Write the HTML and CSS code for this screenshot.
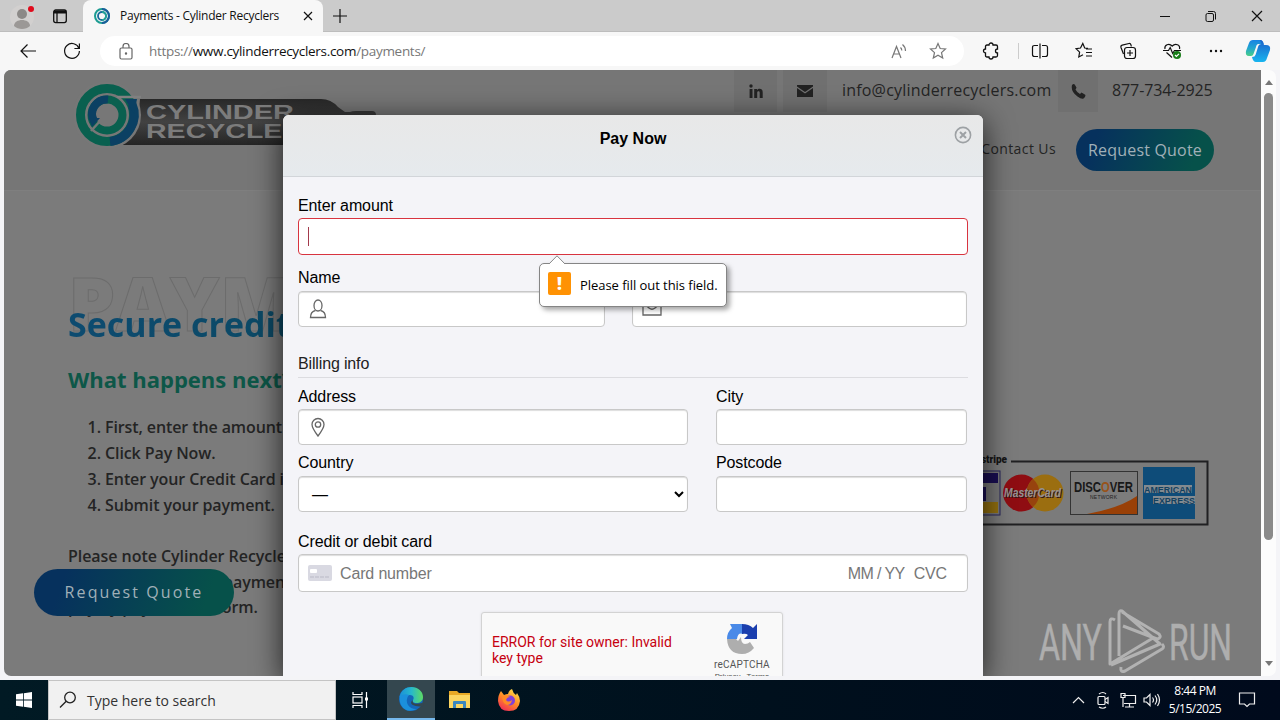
FILE: index.html
```html
<!DOCTYPE html>
<html lang="en">
<head>
<meta charset="utf-8">
<title>Payments - Cylinder Recyclers</title>
<link rel="stylesheet" href="styles.css">
</head>
<body>
<div class="tabstrip">
  <svg class="profile" width="28" height="28" viewBox="0 0 28 28"><circle cx="14" cy="14" r="12" fill="#d2d0cf"/><circle cx="14" cy="11" r="5" fill="#8c8987"/><path d="M6 23c0-8 16-8 16 0-4 4-12 4-16 0z" fill="#9b9896"/><circle cx="23" cy="6" r="3" fill="#e00b1c"/></svg>
  <svg class="tabmenu" width="16" height="16" viewBox="0 0 16 16" fill="none" stroke="#111" stroke-width="1.3"><rect x="1.7" y="2" width="12.6" height="12.6" rx="2"/><path d="M2 4h12" stroke-width="3"/><path d="M5 5v9"/></svg>
  <div class="tab">
    <svg class="fav" width="18" height="18" viewBox="0 0 18 18" fill="none"><circle cx="9" cy="9" r="7" stroke="#1c9c92" stroke-width="2"/><path d="M9 2a7 7 0 0 1 0 14" stroke="#1a5d9b" stroke-width="2"/><circle cx="9" cy="9" r="4" stroke="#1a6b9b" stroke-width="1.8"/><path d="M9 5a4 4 0 0 1 0 8" stroke="#22a394" stroke-width="1.8"/></svg>
    <span class="tab-title">Payments - Cylinder Recyclers</span>
    <svg class="tab-x" width="10" height="10" viewBox="0 0 10 10" stroke="#111" stroke-width="1.2"><path d="M1 1l8 8M9 1l-8 8"/></svg>
  </div>
  <svg class="newtab" width="14" height="14" viewBox="0 0 14 14" stroke="#111" stroke-width="1.2"><path d="M7 0v14M0 7h14"/></svg>
  <svg class="winbtns" width="112" height="14" viewBox="0 0 112 14" fill="none" stroke="#111"><path d="M1 7.500h10"/><rect x="47" y="4.500" width="7.500" height="8" rx="1.500"/><path d="M49 2.500h5.500q2 0 2 2v6"/><path d="M93 2l10 10M103 2L93 12" stroke-width="1.200"/></svg>
</div>
<div class="toolbar">
  <svg class="back" width="18" height="18" viewBox="0 0 18 18" fill="none" stroke="#111" stroke-width="1.2"><path d="M17 9H2M8.500 2.500L2 9l6.500 6.500"/></svg>
  <svg class="reload" width="18" height="18" viewBox="0 0 18 18" fill="none" stroke="#111" stroke-width="1.2"><path d="M16 6.500A7.400 7.400 0 1 0 16.400 9M16.400 1.500v5h-5"/></svg>
  <div class="address">
    <svg width="14" height="17" viewBox="0 0 14 17" fill="none" stroke="#666" stroke-width="1.2"><rect x="1" y="5" width="12" height="11" rx="1.500"/><path d="M4 5V3.500a3 3 0 0 1 6 0V5"/><circle cx="7" cy="10.500" r=".6" fill="#666"/></svg>
    <span class="url">https://<b>www.cylinderrecyclers.com</b>/payments/</span>
    <svg class="read" width="18" height="16" viewBox="0 0 18 16" fill="none" stroke="#777" stroke-width="1.2"><path d="M2 15L6.500 3.500 11 15M3.700 11h5.600M10.500 4.500q1.300 1.200 1.300 3M12.500 1.500q3 2.500 3 6.500"/></svg>
    <svg class="star" width="18" height="18" viewBox="0 0 18 18" fill="none" stroke="#777" stroke-width="1.2"><path d="M9 1.500l2.200 5 5.300.5-4 3.600 1.200 5.400L9 13.200 4.300 16l1.200-5.400-4-3.600 5.300-.5z"/></svg>
  </div>
  <div class="tools">
    <svg width="18" height="18" viewBox="0 0 18 18" fill="none" stroke="#111" stroke-width="1.3"><path d="M5 3h2a2 2 0 0 1 4 0h3q1.500 0 1.500 1.500V7a2 2 0 1 0 0 4v2.500q0 1.500-1.500 1.500h-3a2 2 0 0 1-4 0H5q-1.500 0-1.500-1.500V11a2 2 0 0 1 0-4V4.500Q3.500 3 5 3z"/></svg>
    <i class="sep"></i>
    <svg class="t2" width="18" height="18" viewBox="0 0 18 18" fill="none" stroke="#111" stroke-width="1.2"><path d="M7 3.500H3.500q-2 0-2 2v7q0 2 2 2H7M11 3.500h3.500q2 0 2 2v7q0 2-2 2H11M9 1.500v15"/></svg>
    <svg class="t3" width="18" height="18" viewBox="0 0 18 18" fill="none" stroke="#111" stroke-width="1.2"><path d="M13 6.300l-3.300-.3L7.800 1.500 5.500 6 1 6.700l3.600 3.400L3.800 15 8 12.700M11 7h6M11 10.500h6M11 14h6"/></svg>
    <svg class="t4" width="18" height="18" viewBox="0 0 18 18" fill="none" stroke="#111" stroke-width="1.2"><path d="M4.500 12L2 5.500q-.5-1.800 1.200-2.300L10 1.500q1.500-.3 2 1.500l.3 1.500"/><rect x="5.500" y="5.500" width="11" height="11" rx="2.500"/><path d="M11 8v6M8 11h6"/></svg>
    <svg class="t5" width="19" height="18" viewBox="0 0 19 18" fill="none" stroke="#111" stroke-width="1.2"><path d="M9 15.500L3.500 10.500M2 7C1 3 6 .5 9.200 4 12.500.5 17.500 3 16.500 7M0 8.500h5.500l1.700-3 2.500 6L11.500 8.500H18"/><circle cx="14" cy="13" r="4" fill="#187d19" stroke="none"/><path d="M12 13l1.400 1.400L16 11.800" stroke="#fff"/></svg>
    <svg class="t6" width="16" height="4" viewBox="0 0 16 4" fill="#111"><circle cx="3" cy="2" r="1.200"/><circle cx="8" cy="2" r="1.200"/><circle cx="13" cy="2" r="1.200"/></svg>
    <svg class="copilot" width="26" height="24" viewBox="0 0 26 24"><defs><linearGradient id="ca" x1="0" y1="0" x2="0" y2="1"><stop offset="0" stop-color="#1782e4"/><stop offset=".5" stop-color="#21a5d0"/><stop offset="1" stop-color="#49ce87"/></linearGradient><linearGradient id="cb" x1="0" y1="0" x2="0" y2="1"><stop offset="0" stop-color="#1d60c9"/><stop offset="1" stop-color="#18b5ef"/></linearGradient></defs><path d="M8 1h7q3 0 3.500 4l-5 0q-2 0-2.500 3L8.500 15q-.6 2-2.500 2H4q-4 0-3-5l3-8q1-3 4-3z" fill="url(#ca)"/><path d="M15 1q3 0 4 5h2q5 0 4 5l-3 8q-1 4-4 4h-7q-3 0-4-5 3 0 3.700-2.500L13 8q.7-3 3.500-3z" fill="url(#cb)"/></svg>
  </div>
</div>

<div class="window">
  <main class="page">
    <header class="site-header">
      <svg class="logo" width="310" height="66" viewBox="0 0 310 66">
        <defs><linearGradient id="plate" x1="0" y1="0" x2="0" y2="1"><stop offset="0" stop-color="#282828"/><stop offset=".5" stop-color="#424242"/><stop offset="1" stop-color="#252525"/></linearGradient></defs>
        <path d="M66 17H247q10 0 17 8l7 5h5q2-1 6-1h16q4 0 4 4v30H48Q65 50 65 28z" fill="url(#plate)"/>
        <circle cx="33" cy="33" r="34" fill="#777"/>
        <circle cx="33" cy="33" r="26.500" fill="none" stroke="#09604f" stroke-width="9"/>
        <path d="M58 22A27 27 0 0 1 36 59.500" fill="none" stroke="#0b4063" stroke-width="9"/>
        <path d="M51 17h12l-3 15z" fill="#0b4063"/>
        <path d="M43 15h24" stroke="#808080" stroke-width="2.500"/>
        <circle cx="33" cy="33" r="15.500" fill="none" stroke="#09604f" stroke-width="8"/>
        <path d="M20 39A14.500 14.500 0 0 1 34 17.500" fill="none" stroke="#0b4063" stroke-width="8"/>
        <path d="M15 36h11l-8 9z" fill="#0b4063"/><path d="M27 38L17 49" stroke="#777" stroke-width="2.500"/>
        <g fill="#7c7c7c" font-family="Liberation Sans, sans-serif" font-weight="700" font-size="19.500"><text x="72" y="37" textLength="148" lengthAdjust="spacingAndGlyphs">CYLINDER</text><text x="72" y="56" textLength="176" lengthAdjust="spacingAndGlyphs">RECYCLERS</text></g>
      </svg>
      <div class="header-right">
        <div class="contact">
          <span class="ico in"><svg width="14" height="14" viewBox="0 0 14 14" fill="#222"><circle cx="2" cy="2" r="1.700"/><path d="M.6 5h2.900v9H.6zM5.200 5H8v1.200C9.500 4 13.700 4.300 13.700 8.200V14h-3V8.700c0-2-2.500-1.800-2.500 0V14h-3z"/></svg></span>
          <span class="ico mail"><svg width="16" height="12" viewBox="0 0 16 12" fill="#222"><path d="M0 0h16v1.500L8 7 0 1.500zM0 3l8 5.500L16 3v9H0z"/></svg></span>
          <span class="email">info@cylinderrecyclers.com</span>
          <span class="ico tel"><svg width="15" height="15" viewBox="0 0 15 15" fill="#222"><path d="M1 1q2-2 3 0l1.500 2.500Q5 5 4.500 5.500q1.500 3 4.500 4.500l1.500-1.500q3 1.500 4 2.500 0 2-2 3.500-2 .8-6-2Q-.5 7.500 1 1z"/></svg></span>
          <span class="phone">877-734-2925</span>
        </div>
        <div class="nav"><span class="contact-us">Contact Us</span><span class="quote">Request Quote</span></div>
      </div>
    </header>
    <div class="content">
      <section class="intro">
        <div class="ghost">PAYMENTS</div>
        <h1>Secure credit card</h1>
        <h2>What happens next?</h2>
        <ol><li>First, enter the amount</li><li>Click Pay Now.</li><li>Enter your Credit Card info.</li><li>Submit your payment.</li></ol>
        <p>Please note Cylinder Recyclers<br><span class="lead">accepts card </span>payments<br><span class="lead2">pay by payment</span>form.</p>
      </section>
      <svg class="cards" width="250" height="76" viewBox="0 0 250 76" font-family="Liberation Sans, sans-serif">
        <path d="M51 11.500H247.500V74.500H0" fill="none" stroke="#202022" stroke-width="2"/>
        <text x="21" y="13" font-family="Roboto, sans-serif" font-weight="900" font-size="10" textLength="26" fill="#151515">stripe</text>
        <rect x="-20" y="21" width="60" height="44" fill="#777" stroke="#27255b"/><path d="M-20 23h58v10h-58zM-20 37h46v14h-46z" fill="#190e52"/><path d="M-20 52h58v11h-58z" fill="#93700f"/>
        <circle cx="61.500" cy="43" r="18.500" fill="#8f0d12"/><circle cx="85" cy="43" r="18.500" fill="#9b6e10"/><path d="M73 29a18.500 18.500 0 0 1 0 28 18.500 18.500 0 0 1 0-28z" fill="#97430e"/>
        <text x="45" y="48" font-size="12" font-weight="700" font-style="italic" fill="#331818" textLength="57" lengthAdjust="spacingAndGlyphs">MasterCard</text>
        <text x="44" y="47" font-size="12" font-weight="700" font-style="italic" fill="#969292" textLength="57" lengthAdjust="spacingAndGlyphs">MasterCard</text>
        <rect x="110.500" y="21.500" width="67" height="43" fill="#7c7c7c" stroke="#333"/><path d="M127 64Q160 58 177 46V64z" fill="#994007"/>
        <text x="114" y="42" font-size="14" font-weight="700" fill="#181818" textLength="59" lengthAdjust="spacingAndGlyphs">DISC<tspan fill="#98531a">O</tspan>VER</text><text x="130" y="49" font-size="5" fill="#222" textLength="27">NETWORK</text>
        <rect x="183" y="17" width="52" height="52" fill="#0e4c79"/><path d="M184 35h48v8h-48zM193 46h42v8h-42z" fill="#828a90"/><g font-weight="700" fill="#12405f" font-size="9.500"><text x="184" y="42.500" textLength="48" lengthAdjust="spacingAndGlyphs">AMERICAN</text><text x="193" y="53.500" textLength="42" lengthAdjust="spacingAndGlyphs">EXPRESS</text></g>
      </svg>
    </div>
    <div class="float-quote">Request Quote</div>
    <svg class="watermark" width="200" height="66" viewBox="0 0 200 66"><g font-family="Roboto, sans-serif" font-size="50" fill="#aeaeae" stroke="#aeaeae" stroke-width=".5"><text x="3" y="52" textLength="63" lengthAdjust="spacingAndGlyphs">ANY</text><text x="133" y="52" textLength="63" lengthAdjust="spacingAndGlyphs">RUN</text></g><path d="M79 12q-5-3-5 2v42l5-3 38-23M75 57l49-21-38-33q-3-1-3 3v42M87 18l34 13q5-1 2-5L86 4M85 59q-1 6 4 4l37-22q3-2 0-5" fill="none" stroke="#b2b2b2" stroke-width="3" stroke-linejoin="round"/></svg>

    <form class="modal">
      <div class="modal-head">Pay Now
        <svg class="close" width="18" height="18" viewBox="0 0 18 18" fill="none" stroke="#9da1a4"><circle cx="9" cy="9" r="7.600" stroke-width="1.600"/><path d="M6 6l6 6M12 6l-6 6" stroke-width="2"/></svg>
      </div>
      <div class="modal-body">
        <label>Enter amount</label>
        <div class="input invalid"><i class="caret"></i>
          <div class="tip"><svg class="arrow" width="18" height="9" viewBox="0 0 18 9"><path d="M1 9L9 .8 17 9" fill="#fff" stroke="#888"/></svg><span class="warn">!</span><span>Please fill out this field.</span></div>
        </div>
        <div class="row name-row">
          <div><label>Name</label><div class="input"><svg class="field-ico" width="18" height="20" viewBox="0 0 18 20" fill="none" stroke="#666" stroke-width="1.300"><ellipse cx="9" cy="6.500" rx="4" ry="5.500"/><path d="M6.500 11.500Q1.500 12.500 1.500 18.500h15q0-6-5-7"/></svg></div></div>
          <div><label>Email</label><div class="input"><svg class="field-ico env" width="20" height="20" viewBox="0 0 20 20" fill="none" stroke="#666" stroke-width="1.300"><path d="M1 4h18v12H1zM1 4l6 5q3 2.500 6 0l6-5"/></svg></div></div>
        </div>
        <div class="billing"><span>Billing info</span></div>
        <div class="row addr"><div><label>Address</label><div class="input"><svg class="field-ico" width="18" height="20" viewBox="0 0 18 20" fill="none" stroke="#666" stroke-width="1.300"><path d="M9 19Q3 11 3 7.500a6 6 0 0 1 12 0Q15 11 9 19z"/><circle cx="9" cy="7.500" r="2.700"/></svg></div></div><div><label>City</label><div class="input"></div></div></div>
        <div class="row country"><div><label>Country</label><div class="input select"><span>—</span><svg width="10" height="7" viewBox="0 0 10 7" fill="none" stroke="#000" stroke-width="2"><path d="M1 1l4 4 4-4"/></svg></div></div><div><label>Postcode</label><div class="input"></div></div></div>
        <label class="cc-label">Credit or debit card</label>
        <div class="input card"><svg width="24" height="16" viewBox="0 0 24 16"><rect width="24" height="16" rx="2" fill="#d9d9e2"/><rect x="2" y="4" width="7" height="4" rx="1" fill="#fff"/><path d="M2 12h20" stroke="#b9b9c6" stroke-dasharray="4 1"/></svg><span class="num">Card number</span><span class="exp">MM / YY</span><span class="cvc">CVC</span></div>
        <div class="captcha"><div class="err">ERROR for site owner: Invalid key type</div>
          <div class="rc"><svg width="32" height="32" viewBox="0 0 32 32"><path d="M4 1h13v10q-5-2-6 5H1Q1 9 6 5z" fill="#4a8ae8"/><path d="M16 1q7 0 11 4l4-4v15H18l4-4q-2-2-6-1z" fill="#1b3fae"/><path d="M1 16h9l2 2 3-4q0 7 4 7 3 0 5-2l4 6q-5 6-12 6Q2 31 1 16z" fill="#aeaeae"/></svg><span>reCAPTCHA</span><small>Privacy - Terms</small></div>
        </div>
      </div>
    </form>
  </main>
  <div class="scroll"><i class="up"></i><i class="thumb"></i><i class="down"></i></div>
</div>

<footer class="taskbar">
  <div class="start"><svg width="16" height="16" viewBox="0 0 16 16" fill="#fff"><path d="M0 2.200L7 1.300v6.300H0zM7.800 1.200L16 0v7.600H7.800zM0 8.400h7v6.300l-7-.9zM7.800 8.400H16V16l-8.200-1.200z"/></svg></div>
  <div class="search"><svg width="18" height="18" viewBox="0 0 18 18" fill="none" stroke="#222" stroke-width="1.300"><circle cx="11" cy="6.500" r="5.300"/><path d="M7.200 10.300L1 16.500"/></svg><span>Type here to search</span></div>
  <div class="app"><svg width="18" height="18" viewBox="0 0 18 18" fill="none" stroke="#fff" stroke-width="1.200"><path d="M2 1v2.500h9V1M2 17v-2.500h9V17M15.500 1v16"/><rect x="2" y="6" width="9" height="6"/><path d="M14 6.500h3v3h-3z" fill="#fff" stroke="none"/></svg></div>
  <div class="app active"><svg width="26" height="26" viewBox="0 0 26 26"><defs><linearGradient id="eg" x1="0" x2="1"><stop offset="0" stop-color="#1b8fd8"/><stop offset=".5" stop-color="#27b8cc"/><stop offset="1" stop-color="#5edb62"/></linearGradient></defs><circle cx="13" cy="13" r="12" fill="#1467ba"/><path d="M1.500 11C3 4 8 1 13.500 1 20 1 25 5.500 25 11c0 4-3 6-6.500 6-3 0-4.500-1.500-3.500-3 1.500-2 .5-5-3-5-4 0-8 1-10.500 2z" fill="url(#eg)"/><path d="M2 10q5-3 9-1-4 4-1 10 3 4.500 9 4Q8 28 3 19 1 15 2 10z" fill="#1b90dc"/><path d="M15 14c-1.500 3 2 5 9 3l2 0-1 3c-4 1-8 0-10-1-3-1.500-2-4 0-5z" fill="#34474f"/></svg></div>
  <div class="app"><svg width="22" height="20" viewBox="0 0 22 20"><path d="M0 1h8l2 2h11v15H0z" fill="#e8a925"/><path d="M0 5h21v13H0z" fill="#fbd560"/><path d="M4 18v-6q0-1 1-1h11q1 0 1 1v6h-3v-4H7v4z" fill="#3b87bf"/></svg></div>
  <div class="app"><svg width="24" height="24" viewBox="0 0 24 24"><defs><linearGradient id="ff" x1=".8" y1="0" x2=".2" y2="1"><stop offset="0" stop-color="#ffe14b"/><stop offset=".5" stop-color="#ff8a25"/><stop offset="1" stop-color="#f0285a"/></linearGradient></defs><path d="M4 3l3 4q2-1 4-1 1-4 4-5 1 4 4 6l1-2q3 4 3 8-1 10-11 10Q2 23 1 13q0-6 3-10z" fill="url(#ff)"/><circle cx="13" cy="12.500" r="5" fill="#8040d8"/><path d="M5 8q4-2 8 1-3 0-4 3 2 3 6 0-1 5-5 5-5-2-5-9z" fill="#ff8a25"/></svg></div>
  <svg class="tray" width="90" height="20" viewBox="0 0 90 20" fill="none" stroke="#eee" stroke-width="1.200"><path d="M2 13l5.500-5.500L13 13"/><rect x="27" y="6.500" width="7" height="8" rx="1"/><path d="M34 9.500l3-2v6l-3-2M28 4q4-3 7 0M28 17q4 2.500 7 0"/><path d="M52 5.500h12.500v8H53M58.500 14v3M54 17h9M50 3.500h4v4h-4zM52 8v9"/><path d="M73 8h2.500L79 4.500v11L75.500 12H73zM81.500 7.500q2 2.500 0 5M84 5.500q3.500 4.500 0 9M86.500 4q4 6 0 12"/></svg>
  <div class="clock">8:44 PM<br>5/15/2025</div>
  <svg class="notif" width="18" height="18" viewBox="0 0 18 18" fill="none" stroke="#eee" stroke-width="1.200"><path d="M1.500 2h15v11h-5L9 15.500 6.500 13h-5z"/></svg>
</footer>
</body>
</html>
```
FILE: styles.css
```css
* { box-sizing: border-box; }
body { margin: 0; width: 1280px; height: 720px; overflow: hidden; display: flex; flex-direction: column; background: #f6f6f6; font-family: "Open Sans", sans-serif; }
svg { flex: none; display: block; }

.tabstrip { height: 32px; flex: none; background: #cbcbcb; display: flex; align-items: center; border-bottom: 1px solid #bdbdbd; }
.profile { margin-left: 8px; margin-top: 2px; }
.tabmenu { margin-left: 16px; }
.tab { margin-left: 15px; width: 240px; height: 32px; background: #f7f7f7; border-radius: 8px 8px 0 0; display: flex; align-items: center; padding-left: 10px; }
.tab-title { font-size: 12px; color: #111; margin-left: 9px; width: 183px; white-space: nowrap; letter-spacing: -0.25px; }
.newtab { margin-left: 10px; }
.winbtns { margin-left: auto; margin-right: 9px; }

.toolbar { height: 38px; flex: none; background: #f7f7f7; display: flex; align-items: center; }
.back { margin-left: 19px; }
.reload { margin-left: 26px; }
.address { margin-left: 19px; width: 864px; height: 30px; border-radius: 15px; background: #fff; display: flex; align-items: center; padding-left: 19px; }
.url { font-size: 13.500px; color: #777; margin-left: 16px; letter-spacing: -0.3px; white-space: nowrap; }
.url b { font-weight: 400; color: #111; }
.read { margin-left: auto; }
.star { margin: 0 17px 0 21px; }
.tools { display: flex; align-items: center; margin-left: 18px; }
.sep { width: 1px; height: 16px; background: #ccc; margin: 0 12px 0 18px; }
.t3, .t4, .t5, .t6 { margin-left: 26px; }
.copilot { margin-left: 21px; }

.window { height: 610px; flex: none; padding: 0 4px 4px; display: flex; background: #f4f4f7; }
.page { position: relative; width: 1257px; height: 606px; overflow: hidden; background: #7b7b7b; border-radius: 7px 0 0 7px; }
.scroll { width: 15px; height: 606px; background: #fcfcfc; border-radius: 0 7px 7px 0; display: flex; flex-direction: column; align-items: center; }
.up, .down { width: 0; height: 0; border: 4.500px solid transparent; }
.up { border-bottom: 5px solid #777; border-top: 0; margin-top: 10px; }
.thumb { width: 9px; height: 447px; background: #8a8a8a; border-radius: 5px; margin-top: 8px; }
.down { border-top: 5px solid #777; border-bottom: 0; margin-top: 121px; }

.site-header { height: 121px; background: #767676; border-bottom: 1px solid #7f7f7f; display: flex; justify-content: space-between; }
.logo { margin: 12px 0 0 70px; }
.header-right { width: 527px; }
.contact { display: flex; height: 42px; align-items: center; color: #242424; font-size: 16px; }
.ico { height: 42px; display: flex; align-items: center; justify-content: center; background: #707070; }
.in { width: 43px; }
.mail { width: 44px; margin-left: 6px; }
.email { width: 216px; margin-left: 15px; white-space: nowrap; letter-spacing: .19px; padding-bottom: 2px; }
.tel { width: 40px; }
.phone { margin-left: 14px; letter-spacing: -0.1px; white-space: nowrap; padding-bottom: 2px; }
.nav { display: flex; align-items: center; justify-content: flex-end; height: 42px; margin-top: 17px; padding-right: 47px; }
.contact-us { font-size: 14px; line-height: 20px; color: #242424; margin: -2px 20px 0 0; letter-spacing: .4px; }
.quote { width: 138px; height: 42px; border-radius: 21px; background: linear-gradient(110deg, #06315d 15%, #06514a 85%); color: #a0b0b8; font-size: 16px; line-height: 42px; text-align: center; letter-spacing: .2px; }

.content { display: flex; }
.intro { width: 891px; padding-left: 64px; height: 485px; color: #242424; white-space: nowrap; }
.ghost { font-size: 75px; line-height: 70px; margin-top: 76px; font-weight: 800; color: transparent; -webkit-text-stroke: 1px #6c6c6c; }
h1 { font-size: 34px; line-height: 48px; font-weight: 700; margin: -37px 0 0; background: linear-gradient(90deg, #0d4b70, #0b485f); -webkit-background-clip: text; color: transparent; position: relative; width: 330px; }
h2 { font-size: 22px; line-height: 30px; font-weight: 700; margin: 16px 0 0; color: #0d5748; }
ol { margin: 20px 0 0; padding-left: 37px; font-size: 16px; line-height: 26px; font-weight: 600; letter-spacing: -.1px; }
p { margin: 26px 0 0; font-size: 16px; line-height: 25.700px; font-weight: 600; letter-spacing: -.05px; }
.lead { display: inline-block; width: 155px; }
.lead2 { display: inline-block; width: 148px; }
.cards { margin-top: 259px; margin-left: 65px; }
.float-quote { position: absolute; left: 30px; top: 499px; width: 200px; height: 47px; border-radius: 24px; background: linear-gradient(110deg, #06315d 15%, #06514a 85%); color: #a0b0b8; font-size: 16px; line-height: 47px; text-align: center; letter-spacing: 2.100px; }
.watermark { position: absolute; left: 1032px; top: 538px; }

.modal { position: absolute; left: 279px; top: 45px; width: 700px; height: 562px; background: #f4f4f8; border-radius: 6px 6px 0 0; box-shadow: 0 6px 30px rgba(0,0,0,.75); font-family: "Liberation Sans", Arial, sans-serif; font-size: 16px; color: #000; }
.modal-head { position: relative; height: 62px; border-radius: 6px 6px 0 0; border-bottom: 1px solid #d2d5d9; background: linear-gradient(#e8e8e8, #e6eaed); text-align: center; font-weight: 700; line-height: 47px; }
.close { position: absolute; right: 11px; top: 11px; }
.modal-body { padding: 18px 15px 0; }
label { display: block; height: 20px; line-height: 22px; margin-bottom: 4px; letter-spacing: -.1px; }
.modal-body > label { margin-bottom: 3px; }
.input { position: relative; height: 36px; background: #fff; border: 1px solid #c8c8c8; border-radius: 4px; box-shadow: inset 0 1px 1px #ddd; display: flex; align-items: center; }
.invalid { height: 37px; border-color: #d8343f; box-shadow: none; }
.caret { width: 1px; height: 19px; background: #a33a4c; margin-left: 9px; }
.tip { position: absolute; z-index: 2; left: 240px; top: 44px; width: 188px; height: 44px; border: 1px solid #858585; border-radius: 5px; background: #fff; box-shadow: 3px 3px 5px rgba(0,0,0,.35); display: flex; align-items: center; padding-left: 8px; font: 13px "Open Sans", sans-serif; white-space: nowrap; letter-spacing: -.05px; }
.arrow { position: absolute; left: 8px; top: -9px; }
.warn { width: 23px; height: 23px; margin: -3px 9px 0 0; background: #ff9203; color: #fff; border-radius: 2px; font-weight: 800; font-size: 17px; line-height: 23px; text-align: center; }
.row { display: grid; }
.name-row { grid-template-columns: 307px 335px; gap: 27px; margin-top: 12px; }
.field-ico { margin-left: 10px; }
.env { margin-left: 9px; }
.billing { height: 25px; line-height: 22px; margin-top: 26px; border-bottom: 1px solid #dcdce0; color: #222; letter-spacing: -.15px; }
.addr, .country { grid-template-columns: 390px 251px; gap: 28px; margin-top: 8px; }
.addr label { margin-bottom: 3px; }
.country { margin-top: 7px; }
.select { padding: 0 3px 0 13px; justify-content: space-between; }
.select span { padding-top: 2px; }
.cc-label { margin-top: 19px; }
.card { height: 38px; padding: 0 20px 0 9px; color: #777; line-height: 20px; }
.card span { padding-top: 2px; letter-spacing: -.15px; }
.num { margin-left: 8px; flex: 1; }
.card .exp { letter-spacing: -.6px; }
.cvc { margin-left: 9px; }
.captcha { width: 302px; height: 78px; margin: 20px 0 0 183px; border: 1px solid #d3d3d3; border-radius: 3px; background: #f9f9f9; display: flex; font-family: Roboto, sans-serif; box-shadow: 0 0 3px rgba(0,0,0,.08); }
.err { width: 215px; padding: 21px 20px 0 10px; font-size: 14px; line-height: 16px; color: #c60010; }
.rc { width: 90px; margin-left: 1px; padding: 10px 0 0 8px; display: flex; flex-direction: column; align-items: center; color: #555; font-size: 10px; line-height: 12px; }
.rc span { margin-top: 4px; letter-spacing: .2px; }
.rc small { font-size: 8px; line-height: 11px; margin-top: 0; white-space: nowrap; }

.taskbar { height: 40px; flex: none; background: linear-gradient(90deg, #011a24, #00101d 60%, #000a1c); display: flex; align-items: center; }
.start { width: 48px; padding-left: 16px; }
.search { width: 288px; height: 40px; background: #f1f1f1; border: 1px solid #c4c4c4; display: flex; align-items: center; padding-left: 10px; font-size: 14px; color: #333; }
.search span { margin-left: 10px; }
.app { width: 49px; height: 40px; display: flex; align-items: center; justify-content: center; }
.search + .app { width: 51px; padding-right: 4px; }
.active { width: 48px; background: #34474f; border-bottom: 2px solid #76b9ed; }
.tray { margin-left: auto; }
.clock { width: 70px; margin-left: -1px; text-align: center; color: #fff; font-size: 12px; line-height: 18px; letter-spacing: -.5px; }
.notif { margin: 0 24px 0 8px; }
```
